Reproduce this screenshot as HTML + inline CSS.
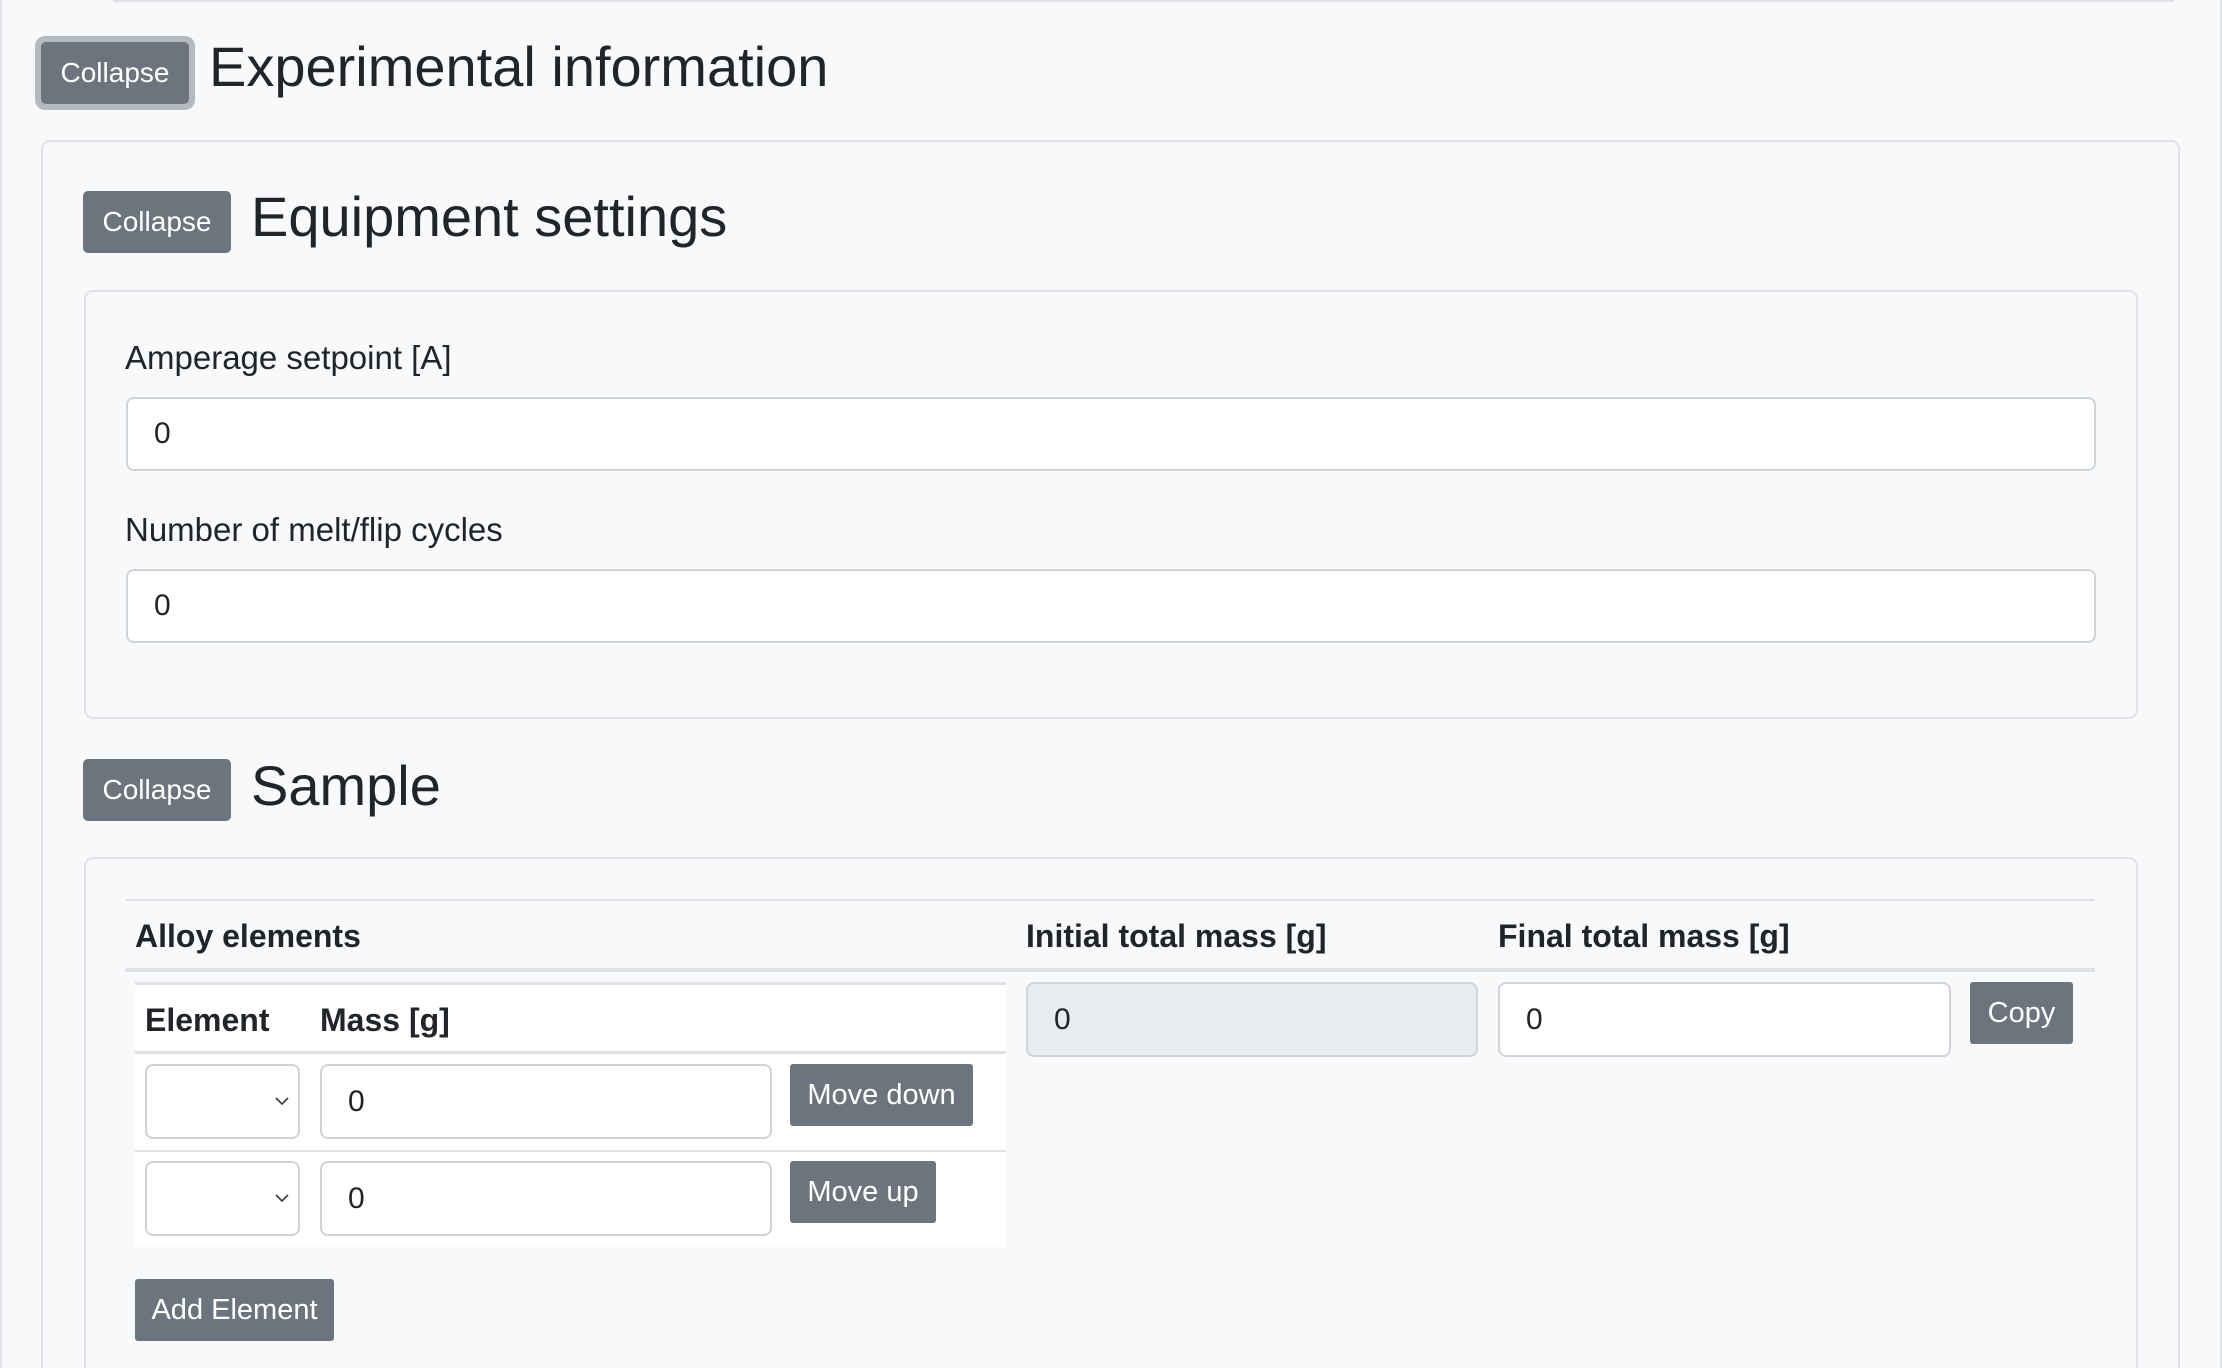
<!DOCTYPE html>
<html style="overflow:hidden;height:1368px"><head><meta charset="utf-8"><style>
*{box-sizing:border-box;margin:0;padding:0}
html,body{overflow:hidden}
body{width:2222px;height:1368px;background:#f8f9fa;font-family:"Liberation Sans",Arial,sans-serif;color:#212529;position:relative}
.a{position:absolute}
.btn{position:absolute;background:#6c757d;color:#fff;font-size:28px;display:flex;align-items:center;justify-content:center;border-radius:5px}
.h{position:absolute;font-size:56px;line-height:1;white-space:nowrap}
.card{position:absolute;border:2px solid #dee2e6;border-radius:9px}
.inp{position:absolute;background:#fff;border:2px solid #ced4da;border-radius:8px;font-size:30px;display:flex;align-items:center;padding-left:26px}
.lbl{position:absolute;font-size:33px;white-space:nowrap;line-height:1}
.b{font-weight:bold;font-size:32px}
.sel{position:absolute;background:#fff;border:2px solid #ced4da;border-radius:8px}
.sel svg{position:absolute;right:8px;top:29px}
</style></head><body>
<div class="a" style="left:0;top:0;width:2px;height:1368px;background:#dee2e6"></div>
<div class="a" style="left:2220px;top:0;width:2px;height:1368px;background:#dee2e6"></div>
<div class="a" style="left:113px;top:0;width:2061px;height:2px;background:#dee2e6"></div>

<div class="a" style="left:35px;top:36px;width:160px;height:74px;border-radius:10px;background:#b6babe"></div>
<div class="btn" style="left:41px;top:42px;width:148px;height:62px">Collapse</div>
<div class="h" style="left:209px;top:39px">Experimental information</div>

<div class="card" style="left:41px;top:140px;width:2139px;height:1228px;border-bottom:none;border-radius:9px 9px 0 0"></div>

<div class="btn" style="left:83px;top:191px;width:148px;height:62px">Collapse</div>
<div class="h" style="left:251px;top:189px">Equipment settings</div>

<div class="card" style="left:84px;top:290px;width:2054px;height:429px"></div>
<div class="lbl" style="left:125px;top:341px">Amperage setpoint [A]</div>
<div class="inp" style="left:126px;top:397px;width:1970px;height:74px">0</div>
<div class="lbl" style="left:125px;top:513px">Number of melt/flip cycles</div>
<div class="inp" style="left:126px;top:569px;width:1970px;height:74px">0</div>

<div class="btn" style="left:83px;top:759px;width:148px;height:62px">Collapse</div>
<div class="h" style="left:251px;top:758px">Sample</div>

<div class="card" style="left:84px;top:857px;width:2054px;height:511px;border-bottom:none;border-radius:9px 9px 0 0"></div>
<div class="a" style="left:125px;top:899px;width:1970px;height:2px;background:#dee2e6"></div>
<div class="lbl b" style="left:135px;top:920px">Alloy elements</div>
<div class="lbl b" style="left:1026px;top:920px">Initial total mass [g]</div>
<div class="lbl b" style="left:1498px;top:920px">Final total mass [g]</div>
<div class="a" style="left:125px;top:968px;width:1970px;height:4px;background:#dee2e6"></div>

<div class="a" style="left:135px;top:982px;width:871px;height:265px;background:#fff;border-top:3px solid #dee2e6"></div>
<div class="lbl b" style="left:145px;top:1004px">Element</div>
<div class="lbl b" style="left:320px;top:1004px">Mass [g]</div>
<div class="a" style="left:135px;top:1051px;width:871px;height:3px;background:#dee2e6"></div>

<div class="sel" style="left:145px;top:1064px;width:155px;height:75px"><svg width="16" height="12" viewBox="0 0 16 12"><path d="M2 3 L8 9 L14 3" stroke="#343a40" stroke-width="1.6" fill="none"/></svg></div>
<div class="inp" style="left:320px;top:1064px;width:452px;height:75px">0</div>
<div class="btn" style="left:790px;top:1064px;width:183px;height:62px;border-radius:3px;font-size:29px">Move down</div>
<div class="a" style="left:135px;top:1150px;width:871px;height:2px;background:#dee2e6"></div>
<div class="sel" style="left:145px;top:1161px;width:155px;height:75px"><svg width="16" height="12" viewBox="0 0 16 12"><path d="M2 3 L8 9 L14 3" stroke="#343a40" stroke-width="1.6" fill="none"/></svg></div>
<div class="inp" style="left:320px;top:1161px;width:452px;height:75px">0</div>
<div class="btn" style="left:790px;top:1161px;width:146px;height:62px;border-radius:3px;font-size:29px">Move up</div>

<div class="btn" style="left:135px;top:1279px;width:199px;height:62px;border-radius:3px;font-size:29px">Add Element</div>

<div class="inp" style="left:1026px;top:982px;width:452px;height:75px;background:#e9ecef">0</div>
<div class="inp" style="left:1498px;top:982px;width:453px;height:75px">0</div>
<div class="btn" style="left:1970px;top:982px;width:103px;height:62px;border-radius:3px;font-size:29px">Copy</div>
</body></html>
